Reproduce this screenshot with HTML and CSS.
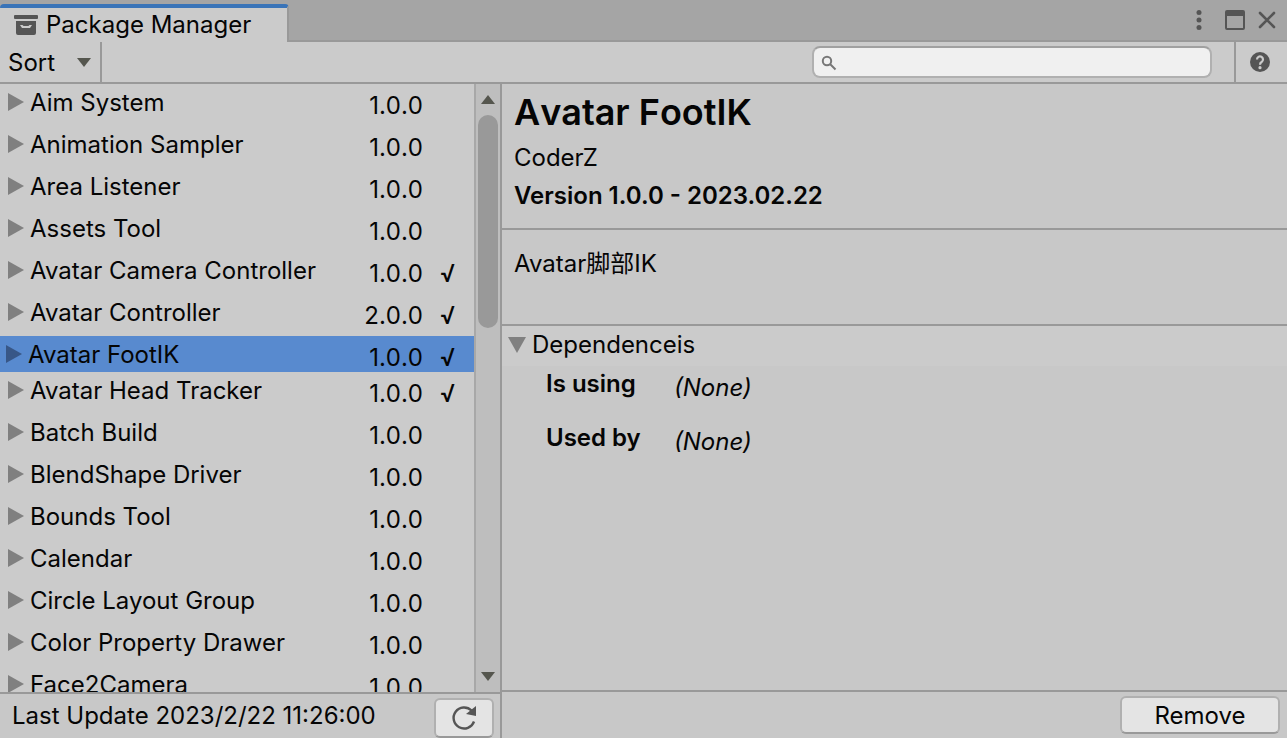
FILE: index.html
```html
<!DOCTYPE html>
<html lang="en">
<head>
    <meta charset="UTF-8">
    <meta name="viewport" content="width=device-width, initial-scale=1.0">
    <title>Package Manager</title>
    <link rel="stylesheet" href="styles.css">
</head>
<body>

    <header class="tab-bar">
        <div class="tab">
            <svg width="24" height="20" viewBox="0 0 24 20" fill="#555">
                <rect x="0" y="0" width="24" height="4" rx="1"/>
                <path fill-rule="evenodd" d="M2 6h20v12a2 2 0 0 1-2 2H4a2 2 0 0 1-2-2zM6 10h12l-2 3H8z"/>
                <path d="M8.500 10h7l-1 1h-5z"/>
            </svg>
            <h1>Package Manager</h1>
        </div>
        <div class="window-buttons">
            <button aria-label="Menu">
                <svg width="6" height="20" viewBox="0 0 6 20" fill="#555">
                    <circle cx="3" cy="2.5" r="2.5"/>
                    <circle cx="3" cy="10" r="2.5"/>
                    <circle cx="3" cy="17.5" r="2.5"/>
                </svg>
            </button>
            <button aria-label="Maximize" class="maximize">
                <svg width="20" height="20" viewBox="0 0 20 20">
                    <rect x="1" y="1" width="18" height="18" rx="1" fill="none" stroke="#555" stroke-width="2"/>
                    <rect x="1" y="1" width="18" height="5" fill="#555"/>
                </svg>
            </button>
            <button aria-label="Close">
                <svg width="18" height="18" viewBox="0 0 18 18" fill="none" stroke="#555" stroke-width="2.6" stroke-linecap="round">
                    <path d="M2 2l14 14M16 2L2 16"/>
                </svg>
            </button>
        </div>
    </header>

    <div class="toolbar">
        <div class="sort">
            <select aria-label="Sort">
                <option>Sort</option>
            </select>
            <span class="arrow-down"></span>
        </div>
        <label class="search">
            <svg width="16" height="16" viewBox="0 0 16 16" fill="none" stroke="#777" stroke-width="2">
                <circle cx="6" cy="6" r="4.2"/>
                <path d="M9 9l5.500 5.500"/>
            </svg>
            <input type="text" aria-label="Search">
        </label>
        <button class="help" aria-label="Help">
            <svg width="20" height="20" viewBox="0 0 20 20">
                <circle cx="10" cy="10" r="10" fill="#555"/>
                <path d="M7 7.500a3 3 0 1 1 4.600 2.500c-1.100.7-1.600 1.200-1.600 2.700" fill="none" stroke="#cbcbcb" stroke-width="2.200"/>
                <circle cx="10" cy="15.700" r="1.600" fill="#cbcbcb"/>
            </svg>
        </button>
    </div>

    <main>
        <section class="sidebar">
            <div class="list-area">
                <ul class="package-list">
                    <li><button><i></i>Aim System</button><span class="version">1.0.0</span></li>
                    <li><button><i></i>Animation Sampler</button><span class="version">1.0.0</span></li>
                    <li><button><i></i>Area Listener</button><span class="version">1.0.0</span></li>
                    <li><button><i></i>Assets Tool</button><span class="version">1.0.0</span></li>
                    <li><button><i></i>Avatar Camera Controller</button><span class="version">1.0.0</span><span class="check">√</span></li>
                    <li><button><i></i>Avatar Controller</button><span class="version">2.0.0</span><span class="check">√</span></li>
                    <li class="selected"><button><i></i>Avatar FootIK</button><span class="version">1.0.0</span><span class="check">√</span></li>
                    <li><button><i></i>Avatar Head Tracker</button><span class="version">1.0.0</span><span class="check">√</span></li>
                    <li><button><i></i>Batch Build</button><span class="version">1.0.0</span></li>
                    <li><button><i></i>BlendShape Driver</button><span class="version">1.0.0</span></li>
                    <li><button><i></i>Bounds Tool</button><span class="version">1.0.0</span></li>
                    <li><button><i></i>Calendar</button><span class="version">1.0.0</span></li>
                    <li><button><i></i>Circle Layout Group</button><span class="version">1.0.0</span></li>
                    <li><button><i></i>Color Property Drawer</button><span class="version">1.0.0</span></li>
                    <li><button><i></i>Face2Camera</button><span class="version">1.0.0</span></li>
                </ul>
                <div class="scrollbar">
                    <span class="arrow-up"></span>
                    <div class="track"><div class="thumb"></div></div>
                    <span class="arrow-down"></span>
                </div>
            </div>
            <footer class="status">
                <span>Last Update 2023/2/22 11:26:00</span>
                <button class="btn refresh" aria-label="Refresh">
                    <svg width="26" height="26" viewBox="0 0 26 26">
                        <path d="M20.500 5.500A10.500 10.500 0 1 0 23 16.500" fill="none" stroke="#555" stroke-width="2.400"/>
                        <path d="M25 1v10L15 9z" fill="#555"/>
                    </svg>
                </button>
            </footer>
        </section>

        <section class="details">
            <div class="summary">
                <h2>Avatar FootIK</h2>
                <p>CoderZ</p>
                <p class="bold">Version 1.0.0 - 2023.02.22</p>
            </div>
            <p class="description">Avatar脚部IK</p>
            <div class="dependencies">
                <button class="foldout"><i></i>Dependenceis</button>
                <dl>
                    <dt>Is using</dt>
                    <dd>(None)</dd>
                    <dt>Used by</dt>
                    <dd>(None)</dd>
                </dl>
            </div>
            <footer class="actions">
                <button class="btn remove">Remove</button>
            </footer>
        </section>
    </main>

</body>
</html>
```
FILE: styles.css
```css
* {
    box-sizing: border-box;
}

body {
    display: flex;
    flex-direction: column;
    height: 100vh;
    margin: 0;
    overflow: hidden;
    background-color: #c8c8c8;
    color: #050505;
    font-family: Inter, "Noto Sans CJK SC", sans-serif;
    font-size: 24px;
    line-height: 36px;
}

button, input, select {
    margin: 0;
    padding: 0;
    border: none;
    background: none;
    color: inherit;
    font: inherit;
}

h1, h2, p, ul, dl, dd {
    margin: 0;
    padding: 0;
}

svg {
    display: block;
}

/* Window tab */
.tab-bar {
    display: flex;
    justify-content: space-between;
    height: 42px;
    flex-shrink: 0;
    background-color: #a5a5a5;
    box-shadow: inset 0 -2px #999;
}

.tab {
    display: flex;
    align-items: center;
    gap: 8px;
    margin-top: 4px;
    padding: 0 36px 0 14px;
    background-color: #cbcbcb;
    border-top: 4px solid #3a74b8;
    border-right: 2px solid #999;
    border-radius: 4px 4px 0 0;
}

.tab h1 {
    font-size: 24px;
    font-weight: 400;
    line-height: 36px;
}

.window-buttons {
    display: flex;
    align-items: center;
    gap: 13px;
    padding: 0 11px 2px 0;
}

.maximize {
    margin-left: 10px;
}

/* Toolbar */
.toolbar {
    display: flex;
    align-items: stretch;
    height: 42px;
    flex-shrink: 0;
    background-color: #cbcbcb;
    border-bottom: 2px solid #999;
}

.sort {
    display: flex;
    align-items: center;
    width: 102px;
    padding: 0 9px 0 8px;
    border-right: 2px solid #999;
}

.sort select {
    flex: 1;
    padding-top: 2px;
    appearance: none;
}

.arrow-down, .arrow-up {
    border: 7px solid transparent;
}

.arrow-down {
    border-top: 9px solid #55564e;
    border-bottom: none;
}

.arrow-up {
    border-bottom: 9px solid #55564e;
    border-top: none;
}

.search {
    display: flex;
    align-items: center;
    gap: 8px;
    width: 400px;
    height: 32px;
    margin: 4px 22px 0 auto;
    padding: 2px 7px 0;
    background-color: #f0f0f0;
    border: 2px solid #b0b0b0;
    border-top-color: #a0a0a0;
    border-radius: 8px;
}

.search input {
    flex: 1;
    min-width: 0;
    height: 26px;
    outline: none;
}

.help {
    width: 53px;
    padding-left: 14px;
    border-left: 2px solid #999;
}

/* Package list */
main {
    display: flex;
    flex: 1;
    min-height: 0;
}

.sidebar {
    display: flex;
    flex-direction: column;
    width: 502px;
    flex-shrink: 0;
    border-right: 2px solid #999;
}

.list-area {
    display: flex;
    flex: 1;
    min-height: 0;
}

.package-list {
    flex: 1;
    overflow: hidden;
    list-style: none;
    background-color: #cbcbcb;
}

.package-list li {
    display: flex;
    height: 36px;
    margin-bottom: 6px;
    padding-left: 8px;
}

.package-list button {
    display: flex;
    align-items: center;
    gap: 6px;
    flex: 1;
    padding-top: 2px;
    text-align: left;
}

.package-list i {
    margin-bottom: 2px;
    border: 9px solid transparent;
    border-left: 16px solid #808080;
    border-right: none;
}

.package-list .selected {
    margin-bottom: 0;
    padding-left: 6px;
    background-color: #588acf;
}

.package-list .selected i {
    border-left-color: #385787;
}

.version, .check {
    padding-top: 4px;
}

.version {
    width: 74px;
    margin-right: 51px;
    font-kerning: none;
    text-align: right;
}

.check {
    width: 34px;
    margin-left: -34px;
    font-weight: 500;
}

.scrollbar {
    display: flex;
    flex-direction: column;
    align-items: center;
    gap: 11px;
    width: 26px;
    padding: 11px 0;
    background-color: #bebebe;
    border-left: 2px solid #a8a8a8;
}

.track {
    flex: 1;
    width: 20px;
}

.thumb {
    height: 39%;
    background-color: #999;
    border-radius: 10px;
}

.status {
    display: flex;
    justify-content: space-between;
    height: 46px;
    padding: 4px 6px 0 12px;
    border-top: 2px solid #999;
}

/* Buttons */
.btn {
    background-color: #e4e4e4;
    border: 2px solid #b0b0b0;
    border-bottom-color: #999;
    border-radius: 6px;
}

.refresh {
    display: flex;
    align-items: center;
    justify-content: center;
    width: 60px;
    height: 40px;
}

.remove {
    width: 160px;
    height: 38px;
    padding-top: 1px;
    line-height: 34px;
}

/* Package details */
.details {
    display: flex;
    flex-direction: column;
    flex: 1;
}

.summary {
    height: 146px;
    padding: 4px 12px;
    border-bottom: 2px solid #999;
}

.summary h2 {
    margin-bottom: 3px;
    font-size: 36px;
    font-weight: 600;
    font-kerning: none;
    line-height: 48px;
}

.summary p {
    line-height: 38px;
}

.bold {
    font-weight: 600;
}

.description {
    height: 96px;
    padding: 16px 12px;
    border-bottom: 2px solid #999;
}

.dependencies {
    flex: 1;
}

.foldout {
    display: flex;
    align-items: center;
    gap: 6px;
    width: 100%;
    height: 40px;
    padding: 0 0 2px 6px;
    background-color: #cbcbcb;
    text-align: left;
}

.foldout i {
    border: 9px solid transparent;
    border-top: 16px solid #808080;
    border-bottom: none;
}

.dependencies dl {
    display: grid;
    grid-template-columns: 128px 1fr;
    row-gap: 14px;
    padding-left: 44px;
}

.dependencies dt {
    font-weight: 600;
}

.dependencies dd {
    padding-top: 4px;
    font-style: italic;
}

.actions {
    display: flex;
    justify-content: flex-end;
    height: 48px;
    padding: 4px 7px 0;
    border-top: 2px solid #999;
}
```
